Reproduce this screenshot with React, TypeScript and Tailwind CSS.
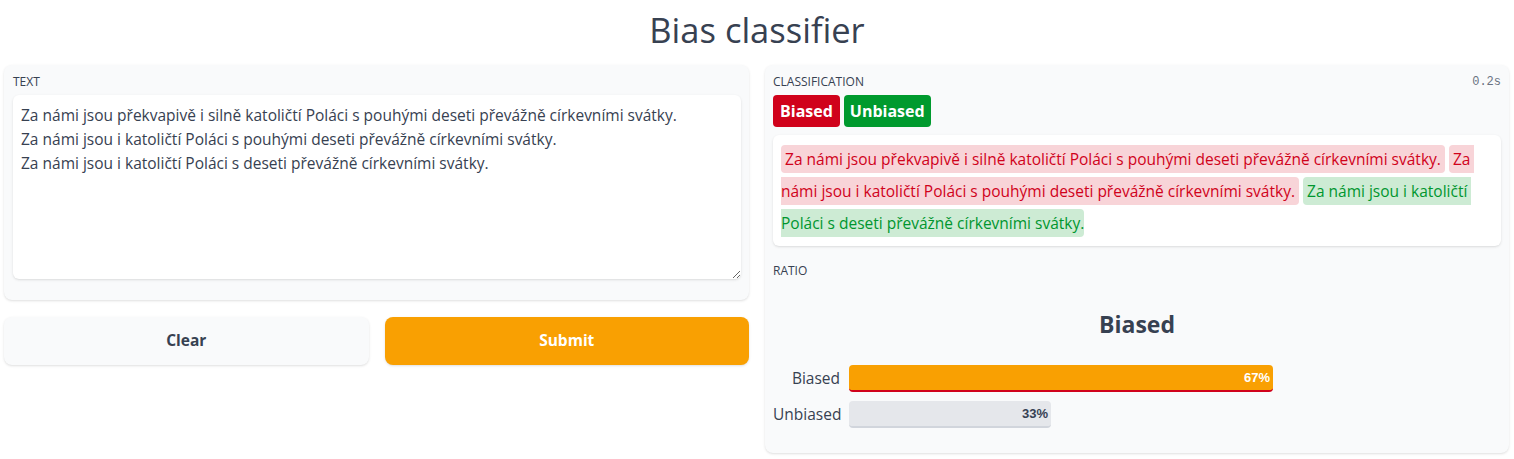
import { useState } from "react";

const sentences = [
        { text: " Za námi jsou překvapivě i silně katoličtí Poláci s pouhými deseti převážně církevními svátky. ", label: "Biased" },
        { text: " Za námi jsou i katoličtí Poláci s pouhými deseti převážně církevními svátky. ", label: "Biased" },
        { text: " Za námi jsou i katoličtí Poláci s deseti převážně církevními svátky.", label: "Unbiased" },
];

const defaultText =
        "Za námi jsou překvapivě i silně katoličtí Poláci s pouhými deseti převážně církevními svátky.\nZa námi jsou i katoličtí Poláci s pouhými deseti převážně církevními svátky.\nZa námi jsou i katoličtí Poláci s deseti převážně církevními svátky.";

export default function App() {
        const [text, setText] = useState(defaultText);

        return (
                <div className="min-h-screen bg-white text-[#374151] font-['Open_Sans','Noto_Sans',sans-serif]">
                        <h1 className="text-center text-[34.5px] leading-[40px] pt-[10px] pb-[15px]">Bias classifier</h1>
                        <div className="flex items-start gap-4 pl-1">
                                <div className="w-[745px] shrink-0 flex flex-col gap-[17px]">
                                        <div className="bg-gray-50 rounded-lg shadow-sm pl-[9px] pr-2 pt-[9px] pb-[21px]">
                                                <div className="text-xs leading-4 mb-[5px]">TEXT</div>
                                                <textarea
                                                        value={text}
                                                        onChange={(e) => setText(e.target.value)}
                                                        className="block w-full h-[184px] bg-white rounded-md shadow-sm px-2 py-[8px] text-[15.5px] leading-6 outline-none"
                                                />
                                        </div>
                                        <div className="flex gap-4">
                                                <button className="flex-1 h-12 rounded-lg bg-gray-50 shadow-sm font-bold text-[15.5px]">Clear</button>
                                                <button className="flex-1 h-12 rounded-lg bg-[#f9a002] text-white shadow-sm font-bold text-[15.5px]">Submit</button>
                                        </div>
                                </div>
                                <div className="w-[744px] shrink-0 bg-gray-50 rounded-lg shadow-sm px-2 pt-[9px] pb-[25px]">
                                        <div className="flex justify-between">
                                                <span className="text-xs leading-4">CLASSIFICATION</span>
                                                <span className="text-xs leading-4 text-gray-500 font-['Liberation_Mono',monospace]">0.2s</span>
                                        </div>
                                        <div className="flex gap-1 mt-[5px]">
                                                <span className="h-8 px-[7px] flex items-center rounded bg-[#d0021b] text-white font-bold text-base">Biased</span>
                                                <span className="h-8 px-[6px] flex items-center rounded bg-[#009a2e] text-white font-bold text-base">Unbiased</span>
                                        </div>
                                        <div className="mt-2 bg-white rounded-md shadow-sm px-2 pt-[8px] pb-[7px] text-[15.5px] leading-8">
                                                {sentences.map((s, i) => (
                                                        <span
                                                                key={i}
                                                                className={
                                                                        s.label === "Biased"
                                                                                ? "bg-[#f8d4d8] text-[#d0021b] rounded-sm py-[3px] mr-1 whitespace-pre-wrap"
                                                                                : "bg-[#cdebd4] text-[#00962f] rounded-sm py-[3px] whitespace-pre-wrap"
                                                                }
                                                        >
                                                                {s.text}
                                                        </span>
                                                ))}
                                        </div>
                                        <div className="text-xs leading-4 mt-[17px]">RATIO</div>
                                        <div className="text-center font-bold text-[23px] leading-7 mt-[31px]">Biased</div>
                                        <div className="flex flex-col gap-[9px] mt-[27px]">
                                                <div className="flex items-center gap-[9px]">
                                                        <span className="w-[67px] text-right text-[15.5px]">Biased</span>
                                                        <div className="w-[424px] h-[27px] rounded bg-[#f9a002] border-b-2 border-[#d0021b] flex items-center justify-end pr-[3px] text-[13px] font-bold text-white font-['Liberation_Sans',sans-serif]">67%</div>
                                                </div>
                                                <div className="flex items-center gap-[9px]">
                                                        <span className="w-[67px] text-right text-[15.5px]">Unbiased</span>
                                                        <div className="w-[202px] h-[27px] rounded bg-gray-200 border-b-2 border-gray-300 flex items-center justify-end pr-[3px] text-[13px] font-bold text-gray-700 font-['Liberation_Sans',sans-serif]">33%</div>
                                                </div>
                                        </div>
                                </div>
                        </div>
                </div>
        );
}
